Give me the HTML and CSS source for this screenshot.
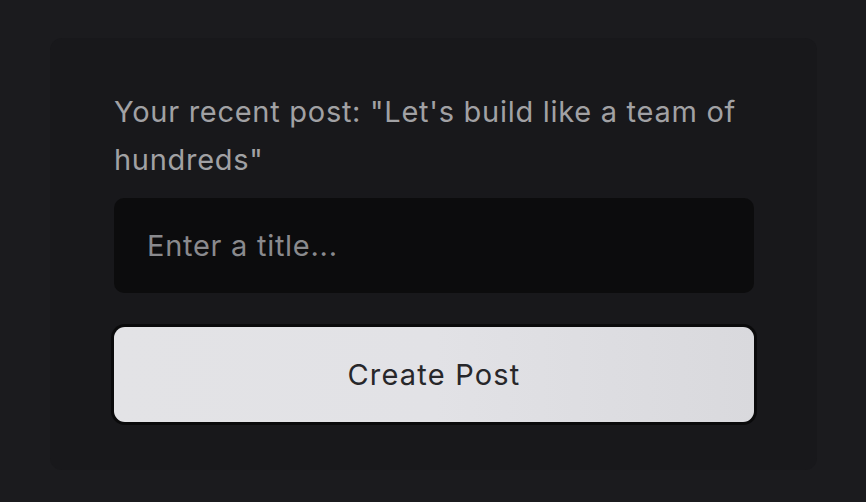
FILE: index.html
```html
<!DOCTYPE html>
<html lang="en">
<head>
<meta charset="utf-8">
<title>Create Post</title>
<link rel="stylesheet" href="styles.css">
</head>
<body>
<main class="card">
  <p class="recent">Your recent post: "Let's build like a team of hundreds"</p>
  <form class="form">
    <input class="title-input" type="text" placeholder="Enter a title...">
    <button class="submit" type="button">Create Post</button>
  </form>
</main>
</body>
</html>
```
FILE: styles.css
```css
html, body {
  margin: 0;
  padding: 0;
  background: #1b1b1e;
  height: 100%;
  overflow: hidden;
}
body {
  font-family: Inter, "Noto Sans", "Liberation Sans", sans-serif;
}
.card {
  margin: 38px 49px 0 50px;
  padding: 50px 63px 48px 64px;
  background: #18181b;
  border-radius: 12px;
}
.recent {
  margin: 0;
  font-size: 29px;
  letter-spacing: 0.72px;
  line-height: 48px;
  color: #a1a1a4;
}
.form {
  display: flex;
  flex-direction: column;
  gap: 34px;
  margin-top: 14px;
}
.title-input {
  box-sizing: border-box;
  width: 100%;
  height: 95px;
  padding: 0 33px;
  border: none;
  border-radius: 10px;
  background: #0c0c0d;
  font-family: inherit;
  font-size: 29px;
  letter-spacing: 0.72px;
  color: #e4e4e7;
  outline: none;
}
.title-input::placeholder {
  color: #8a8a8d;
}
.submit {
  box-sizing: border-box;
  width: 100%;
  height: 95px;
  border: none;
  border-radius: 11px;
  background: linear-gradient(90deg, #e3e3e6 0%, #e2e2e6 50%, #d9d9dd 100%);
  box-shadow: 0 0 0 3px #0a0a0b;
  font-family: inherit;
  font-size: 29px;
  letter-spacing: 1.2px;
  color: #27272a;
  cursor: pointer;
}
```
